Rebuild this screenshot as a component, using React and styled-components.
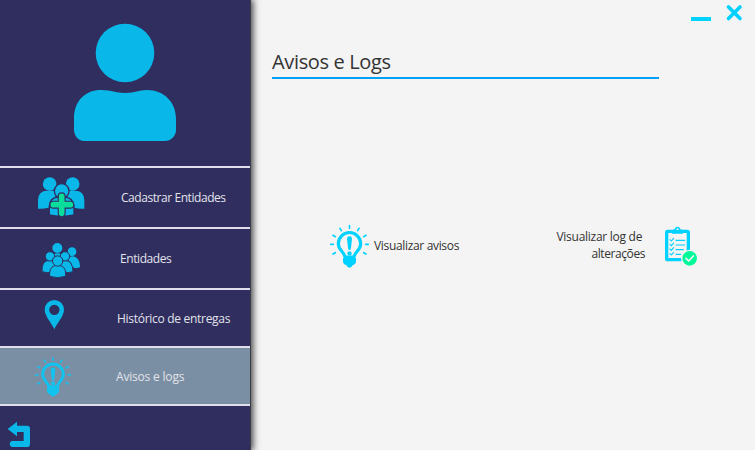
import React from "react";
import styled, { createGlobalStyle } from "styled-components";

const NAVY = "#2f2e5f";
const SKY = "#09b8e8";
const CYAN = "#00d2ff";
const GREEN = "#00fa9a";

const GlobalStyle = createGlobalStyle`
  * { box-sizing: border-box; }
  body {
    margin: 0;
    overflow: hidden;
    font-family: "Open Sans", "Noto Sans", sans-serif;
    font-size: 12px;
    line-height: 17px;
  }
  svg { display: block; flex: none; }
`;

const Window = styled.div`
  display: flex;
  width: 755px;
  height: 450px;
  background: #f4f4f4;
`;

const Sidebar = styled.aside`
  z-index: 1;
  display: flex;
  flex-direction: column;
  flex: none;
  width: 250px;
  background: ${NAVY};
  box-shadow: 1px 0 0 #3e3e48, 2px 0 7px 1px rgba(0, 0, 0, 0.75);
`;

const Profile = styled.header`
  height: 166px;
  padding: 23px 0 0 73px;
`;

const Menu = styled.nav`
  border-top: 2px solid #dfdeea;
`;

const MenuItem = styled.button`
  display: grid;
  grid-template-columns: ${(p) => p.$labelLeft}px auto;
  align-items: start;
  width: 100%;
  height: ${(p) => p.$height}px;
  padding: 0;
  border: 0;
  border-bottom: 2px solid #dfdeea;
  background: ${(p) => (p.$active ? "#7a8fa3" : "transparent")};
  color: #e3e3ea;
  font: inherit;
  text-align: left;
`;

const ItemIcon = styled.span`
  padding: ${(p) => p.$top}px 0 0 ${(p) => p.$left}px;
`;

const Label = styled.span`
  margin-top: ${(p) => p.$top || 0}px;
  letter-spacing: ${(p) => p.$tracking || 0}px;
  white-space: nowrap;
`;

const BackButton = styled.button`
  margin: 15px 0 0 7px;
  padding: 0;
  border: 0;
  background: none;
  align-self: flex-start;
`;

const Content = styled.main`
  flex: 1;
  padding-left: 22px;
`;

const WindowControls = styled.div`
  display: flex;
  justify-content: flex-end;
  gap: 14px;
  height: 46px;
  padding: 4px 12px 0 0;
`;

const Title = styled.h1`
  width: 387px;
  height: 33px;
  margin: 0;
  border-bottom: 2px solid #00a2f8;
  color: #333;
  font-size: 20px;
  font-weight: 400;
  line-height: 31px;
  letter-spacing: ${(p) => p.$tracking}px;
`;

const Actions = styled.section`
  display: flex;
  justify-content: space-between;
  width: 426px;
  margin-top: 145px;
  padding-left: 57px;
  color: #333;
`;

const Action = styled.div`
  display: flex;
  gap: ${(p) => p.$gap}px;
`;

const LogIconSlot = styled.span`
  padding-top: 2px;
`;

const RightLabel = styled.div`
  display: flex;
  flex-direction: column;
  align-items: flex-end;
  padding-top: 4px;
`;

const UserIcon = () => (
  <svg width="104" height="119" viewBox="0 0 104 119" fill={SKY}>
    <circle cx="52" cy="30" r="29.3" />
    <path d="M1 96C1 77 13 67 28 67C40 67 41 70 52 70C63 70 65 67 74 67C91 67 103 79 103 96V107C103 113 98 118 92 118H11C5 118 1 112 1 107Z" />
  </svg>
);

const AddGroupIcon = () => (
  <svg width="48" height="41" viewBox="111 48 144 123" fill={SKY}>
    <circle cx="149" cy="72" r="20.5" />
    <circle cx="218" cy="72" r="20.5" />
    <path d="M114 146V121Q114 92 142 92H166V136Q142 148 114 146Z" />
    <path d="M253 146V121Q253 92 225 92H202V136Q225 148 253 146Z" />
    <g stroke={NAVY} strokeWidth="4">
      <path d="M148 165V139Q149 113 175 111H195Q219 113 222 139V165Q185 173 148 165Z" />
      <circle cx="185" cy="93" r="22" />
    </g>
    <path d="M185 109V160M160 134H211" stroke={NAVY} strokeWidth="24" strokeLinecap="round" />
    <path d="M185 109V160M160 134H211" stroke="#0adc9b" strokeWidth="17" strokeLinecap="round" />
  </svg>
);

const GroupIcon = () => (
  <svg width="40" height="36" viewBox="123 51 120 108" fill={SKY}>
    <circle cx="172" cy="69" r="15" />
    <path d="M162 88Q173 81 184 88V94H162Z" />
    <circle cx="216" cy="80" r="13" />
    <path d="M203 101Q214 90 226 96Q240 103 240 127Q229 132 217 127Q216 113 207 108Z" />
    <g stroke={NAVY} strokeWidth="3">
      <path d="M126 140Q124 106 150 106Q164 106 166 120L157 142Q140 145 126 140Z" />
      <path d="M181 120Q184 106 196 106Q219 108 219 140Q205 145 192 141Z" />
      <circle cx="150" cy="94" r="14" />
      <circle cx="195" cy="94" r="14" />
      <path d="M149 154V144Q150 121 173 121Q196 121 197 144V154Q173 162 149 154Z" />
      <circle cx="173" cy="108" r="15.5" />
    </g>
  </svg>
);

const PinIcon = () => (
  <svg width="21" height="31" viewBox="132 42 63 93" fill={SKY}>
    <path
      fillRule="evenodd"
      d="M163 133C157 116 134 94 134 74A29 29 0 0 1 192 74C192 94 169 116 163 133ZM163 59A15.5 15.5 0 1 0 163 90A15.5 15.5 0 1 0 163 59Z"
    />
  </svg>
);

const BulbIcon = ({ width = 41, height = 45, color = CYAN }) => (
  <svg width={width} height={height} viewBox="27 27 123 135" fill="none" stroke={color} strokeLinecap="round">
    <path
      d="M75 126C73 111 55 106 55 86A33.5 33.5 0 0 1 122 86C122 106 104 111 102 126Z"
      strokeWidth="9.5"
      strokeLinejoin="round"
    />
    <path d="M69 129H108V142Q105 149 98 151Q95 158 88.500 158Q82 158 79 151Q72 149 69 142Z" fill={color} stroke="none" />
    <path d="M81 71Q81 64 88.500 64Q96 64 96 71L92.500 103Q88.500 108 84.500 103Z" fill={color} stroke="none" />
    <circle cx="88.500" cy="115" r="6.500" fill={color} stroke="none" />
    <path
      d="M88.500 32V40M60 40L64 47M117 40L113 47M39 61L46 65M138 61L131 65M32 88H40M145 88H137M39 117L46 113M138 117L131 113"
      strokeWidth="5"
    />
  </svg>
);

const BackIcon = () => (
  <svg width="24" height="27" viewBox="21 243 72 81" fill={SKY}>
    <path d="M23 267L51 245V257H81Q90 257 90 266V311Q90 321 81 321H36Q29 318 29 312Q29 305 36 303H71V276H51V289Z" />
  </svg>
);

const LogIcon = () => (
  <svg width="34" height="41" viewBox="342 33 102 123" fill="none">
    <rect x="350" y="49" width="65" height="85" rx="3" stroke={CYAN} strokeWidth="10" />
    <path d="M366 56V48Q366 43 374 43Q375 35 382.500 35Q390 35 391 43Q399 43 399 48V56Z" fill={CYAN} />
    <circle cx="382.500" cy="43" r="3" fill="#f4f4f4" />
    <path
      d="M360 74L364 78L371 70M360 88L364 92L371 84M360 102L364 106L371 98M360 116L364 120L371 112M378 76H404M378 90H404M378 104H400M378 118H392"
      stroke={CYAN}
      strokeWidth="3.400"
      strokeLinecap="round"
    />
    <circle cx="419" cy="130" r="24" fill={GREEN} stroke="#f4f4f4" strokeWidth="4" />
    <path d="M408 130L416 138L430 123" stroke="#f4f4f4" strokeWidth="5" strokeLinecap="round" strokeLinejoin="round" />
  </svg>
);

const MinimizeIcon = () => (
  <svg width="20" height="18" viewBox="0 0 20 18">
    <path d="M0 13H20V17H0Z" fill={CYAN} />
  </svg>
);

const CloseIcon = () => (
  <svg width="18" height="18" viewBox="0 0 18 18">
    <path d="M3.500 3L15 14.500M15 3L3.500 14.500" stroke={CYAN} strokeWidth="3.600" strokeLinecap="round" />
  </svg>
);

const items = [
  { text: "Cadastrar Entidades", icon: <AddGroupIcon />, height: 61, left: 37, top: 8, labelLeft: 121, labelTop: 21, tracking: -0.44 },
  { text: "Entidades", icon: <GroupIcon />, height: 61, left: 41, top: 13, labelLeft: 120, labelTop: 21, tracking: -0.42 },
  { text: "Histórico de entregas", icon: <PinIcon />, height: 58, left: 44, top: 9, labelLeft: 117, labelTop: 20, tracking: -0.29 },
  {
    text: "Avisos e logs",
    icon: <BulbIcon width={38} height={42} color="#12c2ef" />,
    height: 58, left: 34, top: 8, labelLeft: 116, labelTop: 20, tracking: -0.19, active: true,
  },
];

export default function App() {
  return (
    <>
      <GlobalStyle />
      <Window>
        <Sidebar>
          <Profile><UserIcon /></Profile>
          <Menu>
            {items.map((item) => (
              <MenuItem key={item.text} $height={item.height} $labelLeft={item.labelLeft} $active={item.active}>
                <ItemIcon $left={item.left} $top={item.top}>{item.icon}</ItemIcon>
                <Label $top={item.labelTop} $tracking={item.tracking}>{item.text}</Label>
              </MenuItem>
            ))}
          </Menu>
          <BackButton aria-label="Voltar"><BackIcon /></BackButton>
        </Sidebar>
        <Content>
          <WindowControls>
            <MinimizeIcon />
            <CloseIcon />
          </WindowControls>
          <Title $tracking={-0.35}>Avisos e Logs</Title>
          <Actions>
            <Action $gap={4}>
              <BulbIcon />
              <Label $top={13} $tracking={-0.33}>Visualizar avisos</Label>
            </Action>
            <Action $gap={19}>
              <RightLabel>
                <Label $tracking={-0.27}>Visualizar log de&nbsp;</Label>
                <Label $tracking={-0.42}>alterações</Label>
              </RightLabel>
              <LogIconSlot><LogIcon /></LogIconSlot>
            </Action>
          </Actions>
        </Content>
      </Window>
    </>
  );
}
